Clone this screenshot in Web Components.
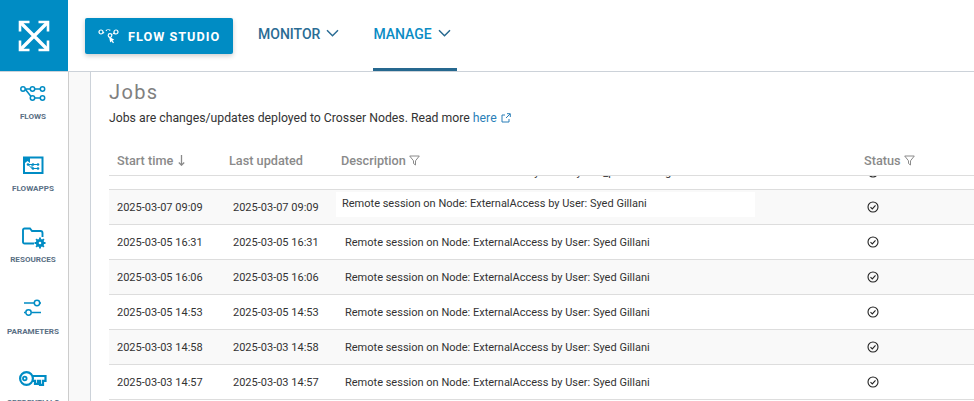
<!DOCTYPE html>
<html>
<head>
<meta charset="utf-8">
<style>
  html, body { margin: 0; height: 100%; overflow: hidden; background: #fff; }
  body { font-family: Roboto, "Liberation Sans", sans-serif; color: #333; }
</style>
</head>
<body>
<app-shell>
  <top-bar slot="top"></top-bar>
  <side-bar slot="side">
    <side-item label="FLOWS" icon="flows"></side-item>
    <side-item label="FLOWAPPS" icon="flowapps"></side-item>
    <side-item label="RESOURCES" icon="resources"></side-item>
    <side-item label="PARAMETERS" icon="parameters"></side-item>
    <side-item label="CREDENTIALS" icon="credentials"></side-item>
  </side-bar>
  <jobs-page>
    <job-row clipped start="" updated="" desc="Remote session on Node: ExternalAc by User: Syedm_palladinonag"></job-row>
    <job-row editing start="2025-03-07 09:09" updated="2025-03-07 09:09" desc="Remote session on Node: ExternalAccess by User: Syed Gillani"></job-row>
    <job-row start="2025-03-05 16:31" updated="2025-03-05 16:31" desc="Remote session on Node: ExternalAccess by User: Syed Gillani"></job-row>
    <job-row start="2025-03-05 16:06" updated="2025-03-05 16:06" desc="Remote session on Node: ExternalAccess by User: Syed Gillani"></job-row>
    <job-row start="2025-03-05 14:53" updated="2025-03-05 14:53" desc="Remote session on Node: ExternalAccess by User: Syed Gillani"></job-row>
    <job-row start="2025-03-03 14:58" updated="2025-03-03 14:58" desc="Remote session on Node: ExternalAccess by User: Syed Gillani"></job-row>
    <job-row start="2025-03-03 14:57" updated="2025-03-03 14:57" desc="Remote session on Node: ExternalAccess by User: Syed Gillani"></job-row>
  </jobs-page>
</app-shell>

<script>
(function() {
  // Small helper, every element here just sets its shadow markup once
  function shadow(el, html) {
    el.attachShadow({ mode: 'open' }).innerHTML = html
  }

  // --- icons
  const BLUE = '#008cc4'
  const ICONS = {
    flows: `<svg width="28" height="20" viewBox="0 0 28 20" fill="none" stroke="${BLUE}" stroke-width="1.5">
      <circle cx="3" cy="6" r="2.2"/><circle cx="12.500" cy="6" r="2.200"/><circle cx="22.500" cy="6" r="2.200"/><circle cx="12.500" cy="15" r="2.200"/><circle cx="22.500" cy="15" r="2.200"/>
      <path d="M5.200 6h5.100M14.700 6h5.600M14.700 15h5.600M5.500 6.500l5.500 7"/></svg>`,
    flowapps: `<svg width="22" height="20" viewBox="0 0 22 20" fill="none" stroke="${BLUE}">
      <rect x="1" y="2.500" width="18.500" height="15.500" stroke-width="2"/>
      <path d="M2 2v6l2.500-2L7 8V2z" fill="${BLUE}" stroke="none"/>
      <path d="M5 9.500h11M9 9.500v4h7M5 9.500l4 4" stroke-width="1"/>
      <g fill="${BLUE}" stroke="none"><circle cx="5" cy="9.500" r="1.300"/><circle cx="10" cy="9.500" r="1.300"/><circle cx="15" cy="9.500" r="1.300"/><circle cx="10" cy="13.500" r="1.300"/><circle cx="15" cy="13.500" r="1.300"/></g></svg>`,
    resources: `<svg width="24" height="20" viewBox="0 0 24 20" fill="none" style="overflow:visible">
      <path d="M12 17.500H2.500A1.500 1.500 0 0 1 1 16V4A1.500 1.500 0 0 1 2.500 2.500H8L10 5h8.500A2 2 0 0 1 20.500 7v4" stroke="${BLUE}" stroke-width="1.900"/>
      <circle cx="18" cy="17" r="2.700" stroke="${BLUE}" stroke-width="2.800"/>
      <path d="M18 11.500v11M12.500 17h11M14.100 13.100l7.800 7.800M21.900 13.100l-7.800 7.800" stroke="${BLUE}" stroke-width="1.900" stroke-dasharray="1.700 7.600 1.700"/></svg>`,
    parameters: `<svg width="20" height="18" viewBox="0 0 20 18" fill="none" stroke="${BLUE}" stroke-width="1.500">
      <path d="M0 4h10M16 4h1M0 13.500h1.500M7.500 13.500H17"/><circle cx="13" cy="4" r="2.700"/><circle cx="4.500" cy="13.500" r="2.700"/></svg>`,
    credentials: `<svg width="30" height="18" viewBox="0 0 30 18" fill="none" stroke="${BLUE}" stroke-width="2.200">
      <circle cx="7.500" cy="8.500" r="6.400"/><circle cx="5.800" cy="8.500" r="1.800" stroke-width="1.800"/>
      <path d="M14 6h12.500v4.800H24v4h-3v-4h-2v3h-3v-3h-2"/></svg>`,
    logo: `<svg width="32" height="32" viewBox="0 0 32 32" fill="none" stroke="#fff" stroke-width="3.400">
      <path d="M3 3l26 26M29 3L3 29"/><path d="M11.500 2H2v9.500M20.500 2H30v9.500M11.500 30H2v-9.500M20.500 30H30v-9.500" stroke-width="2.600"/></svg>`,
    studio: `<svg width="22" height="16" viewBox="0 0 22 16" fill="none" stroke="#fff" stroke-width="1.200">
      <circle cx="4" cy="4" r="2"/><circle cx="19" cy="4" r="2"/><circle cx="13" cy="7.500" r="1.800"/>
      <path d="M9 2.800l1.200-1.300h2l1 1M6 4.500l1.500.4M17 5l-2 1.400" stroke-dasharray="1.200 .8"/>
      <path d="M12 8.500l1.200 6 1.300-1.300 1.500 2 1-.8-1.500-2 1.800-.6z" fill="#fff" stroke="none"/></svg>`,
    chevron: `<svg width="13" height="8" viewBox="0 0 13 8" fill="none" stroke="currentColor" stroke-width="1.500"><path d="M1 1.200l5.500 5.500 5.500-5.500"/></svg>`,
    external: `<svg width="10" height="10" viewBox="0 0 10 10" fill="none" stroke="#2b7fb8" stroke-width="1"><path d="M4 2H1v7h7V6M5 5l4-4M6 .7h3.300V4"/></svg>`,
    filter: `<svg width="11" height="11" viewBox="0 0 11 11" fill="none" stroke="#8a8a8a" stroke-width="1"><path d="M.7 1h9.600L6.500 5.800V10l-2-1.500V5.800z"/></svg>`,
    arrow: `<svg class="sort" width="7" height="11" viewBox="0 0 7 11" fill="none" stroke="#8a8a8a" stroke-width="1.300"><path d="M3.500 0v10M.8 7.500l2.700 2.700 2.700-2.700"/></svg>`,
    check: `<svg width="12" height="12" viewBox="0 0 12 12" fill="none" stroke="#222" stroke-width="1.100"><circle cx="6" cy="6" r="5"/><path d="M3.500 6.200l1.800 1.700 3.200-3.500"/></svg>`
  }

  // --- page frame
  class AppShell extends HTMLElement {
    constructor() {
      super()
      shadow(this, `
        <style>
          :host { display: grid; grid-template-columns: 69px 22px 1fr; grid-template-rows: 72px 329px; width: 974px; height: 401px; overflow: hidden; }
          ::slotted([slot=top]) { grid-column: 1 / 4; }
          #strip { background: #f9f9f9; border-right: 1px solid #ccd2d9; }
        </style>
        <slot name="top"></slot>
        <slot name="side"></slot>
        <div id="strip"></div>
        <slot></slot>
      `)
    }
  }

  class TopBar extends HTMLElement {
    constructor() {
      super()
      shadow(this, `
        <style>
          :host { display: flex; height: 72px; box-sizing: border-box; border-bottom: 1px solid #ccd2d9; }
          #logo { width: 68px; height: 71px; background: #008cc4; display: flex; align-items: center; justify-content: center; }
          #studio { margin: 18px 0 0 17px; width: 148px; height: 36px; box-sizing: border-box; padding-left: 12px; background: #008cc4; border-radius: 2px;
            box-shadow: 0 2px 5px rgba(0,0,0,.2); color: #fff; display: flex; align-items: center; gap: 9px; font: 700 12.700px Roboto, sans-serif; letter-spacing: 1px; }
          .menu { display: flex; align-items: flex-start; gap: 6px; height: 71px; box-sizing: border-box; padding-top: 26px; font: 500 14px/17px Roboto, sans-serif; color: #2a6c94; }
          .menu svg { margin-top: 3px; }
          #monitor { margin-left: 25px; }
          #manage { margin-left: 34px; width: 84px; color: #0b8cc4; border-bottom: 3px solid #26688f; }
          #manage svg { color: #26688f; }
        </style>
        <div id="logo">${ICONS.logo}</div>
        <div id="studio">${ICONS.studio}<span>FLOW STUDIO</span></div>
        <div class="menu" id="monitor"><span>MONITOR</span>${ICONS.chevron}</div>
        <div class="menu" id="manage"><span>MANAGE</span>${ICONS.chevron}</div>
      `)
    }
  }

  class SideBar extends HTMLElement {
    constructor() {
      super()
      shadow(this, `
        <style>
          :host { display: flex; flex-direction: column; width: 68px; height: 329px; overflow: hidden; border-right: 1px solid #ccc; background: #fff; }
        </style>
        <slot></slot>
      `)
    }
  }

  class SideItem extends HTMLElement {
    constructor() {
      super()
      shadow(this, `
        <style>
          :host { display: flex; flex: none; flex-direction: column; align-items: center; height: 71.600px; box-sizing: border-box; padding-top: 11px; }
          #icon { height: 20px; display: flex; align-items: center; justify-content: center; }
          #label { margin: 7px 2px 0 0; font: 700 8.100px/12px Roboto, sans-serif; color: #5a7084; }
        </style>
        <div id="icon">${ICONS[this.getAttribute('icon')]}</div>
        <div id="label">${this.getAttribute('label')}</div>
      `)
    }
  }

  // --- jobs list
  class JobsPage extends HTMLElement {
    constructor() {
      super()
      shadow(this, `
        <style>
          :host { display: block; min-width: 0; overflow: hidden; padding-left: 18px; }
          h1 { margin: 8px 0 0; font: 400 20px/24px Roboto, sans-serif; letter-spacing: 1.400px; color: #808080; }
          p { margin: 6px 0 0; font: 400 12.250px/16px Roboto, sans-serif; color: #333; }
          a { color: #2b7fb8; text-decoration: none; }
          p svg { margin-left: 1px; vertical-align: -1px; }
          #head { display: grid; grid-template-columns: 112px 112px 523px auto; margin-top: 20px; height: 30px; box-sizing: border-box; padding-left: 8px; align-items: center;
            border-bottom: 1px solid #ddd; font: 500 12.700px/16px Roboto, sans-serif; color: #8a8a8a; }
          #head svg { margin-left: 3px; vertical-align: -1px; }
          #head svg.sort { margin-left: 5px; }
          #rows { height: 300px; overflow: hidden; }
        </style>
        <h1>Jobs</h1>
        <p>Jobs are changes/updates deployed to Crosser Nodes. Read more <a>here</a> ${ICONS.external}</p>
        <div id="head">
          <div>Start time${ICONS.arrow}</div>
          <div>Last updated</div>
          <div>Description${ICONS.filter}</div>
          <div>Status${ICONS.filter}</div>
        </div>
        <div id="rows"><slot></slot></div>
      `)
    }
  }

  class JobRow extends HTMLElement {
    constructor() {
      super()
      shadow(this, `
        <style>
          :host { display: grid; grid-template-columns: 116px 112px 522px auto; height: 35px; box-sizing: border-box; padding-left: 8px; align-items: center;
            border-bottom: 1px solid #ddd; font: 400 11px/15px Roboto, sans-serif; color: #333; }
          :host(:nth-of-type(even)) { background: #f9f9f9; }
          :host([clipped]) { margin-top: -21px; }
          :host([editing]) #desc { margin: -5px 0 0 -9px; padding: 4px 6px; height: 17px; background: #fff; width: 407px; }
          #status { display: flex; }
        </style>
        <div>${this.getAttribute('start')}</div>
        <div>${this.getAttribute('updated')}</div>
        <div id="desc">${this.getAttribute('desc')}</div>
        <div id="status">${ICONS.check}</div>
      `)
    }
  }

  customElements.define('app-shell', AppShell)
  customElements.define('top-bar', TopBar)
  customElements.define('side-bar', SideBar)
  customElements.define('side-item', SideItem)
  customElements.define('jobs-page', JobsPage)
  customElements.define('job-row', JobRow)
})()
</script>
</body>
</html>
